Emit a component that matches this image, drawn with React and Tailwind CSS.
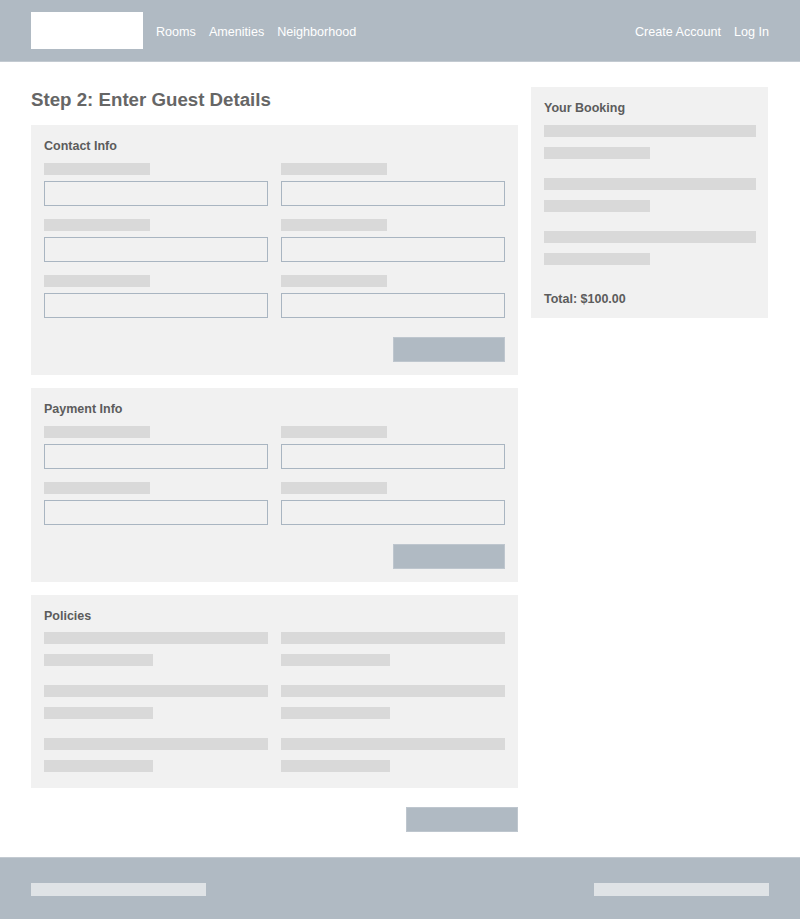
import React from 'react';

const font = { fontFamily: '"Liberation Sans", Arial, sans-serif' };

function Bar({ className = '' }) {
  return <div className={`h-[12px] bg-[#d9d9d9] ${className}`}></div>;
}

function Field() {
  return (
    <div className="flex flex-col">
      <Bar className="w-[106px]" />
      <div className="mt-[6px] h-[25px] border border-[#a9b5c1] bg-[#f1f1f1]"></div>
    </div>
  );
}

function Button() {
  return <div className="w-[112px] h-[25px] bg-[#b0bac3] border border-[#bec6ce]"></div>;
}

function FormCard({ title, rows }) {
  return (
    <div className="bg-[#f1f1f1] px-[13px] pt-[14px] pb-[13px]">
      <h3 className="text-[12.5px] leading-[14px] font-bold text-[#5c5c5c]">{title}</h3>
      <div className="mt-[10px] grid grid-cols-2 gap-x-[13px] gap-y-[13px]">
        {Array.from({ length: rows * 2 }).map((_, i) => (
          <Field key={i} />
        ))}
      </div>
      <div className="mt-[19px] flex justify-end">
        <Button />
      </div>
    </div>
  );
}

function Policy() {
  return (
    <div className="flex flex-col gap-[10px]">
      <Bar className="w-full" />
      <Bar className="w-[109px]" />
    </div>
  );
}

export default function App() {
  return (
    <div style={font} className="min-h-screen bg-white flex flex-col">
      {/* Header */}
      <header className="h-[62px] bg-[#b0bac3] border-b border-[#c3cad1] px-[31px] flex items-center justify-between">
        <div className="flex items-center gap-[13px]">
          <div className="w-[112px] h-[37px] bg-white"></div>
          <nav className="flex gap-[13px] pt-[3px] text-[12.6px] text-white">
            <span>Rooms</span>
            <span>Amenities</span>
            <span>Neighborhood</span>
          </nav>
        </div>
        <nav className="flex gap-[13px] pt-[3px] text-[12.6px] text-white">
          <span>Create Account</span>
          <span>Log In</span>
        </nav>
      </header>

      {/* Main */}
      <main className="px-[31px] pt-[25px] pb-[25px] flex gap-[13px] items-start">
        <div className="w-[487px] flex flex-col">
          <h1 className="text-[18.7px] leading-[25px] font-bold text-[#666666] mb-[13px]">
            Step 2: Enter Guest Details
          </h1>
          <FormCard title="Contact Info" rows={3} />
          <div className="mt-[13px]">
            <FormCard title="Payment Info" rows={2} />
          </div>
          <div className="mt-[13px] bg-[#f1f1f1] px-[13px] pt-[14px] pb-[16px]">
            <h3 className="text-[12.5px] leading-[14px] font-bold text-[#5c5c5c]">Policies</h3>
            <div className="mt-[9px] grid grid-cols-2 gap-x-[13px] gap-y-[19px]">
              {Array.from({ length: 6 }).map((_, i) => (
                <Policy key={i} />
              ))}
            </div>
          </div>
          <div className="mt-[19px] flex justify-end">
            <Button />
          </div>
        </div>

        {/* Booking summary */}
        <aside className="w-[237px] bg-[#f1f1f1] pl-[13px] pr-[12px] pt-[14px] pb-[12px]">
          <h3 className="text-[12.5px] leading-[14px] font-bold text-[#5c5c5c]">Your Booking</h3>
          <div className="mt-[10px] flex flex-col gap-[19px]">
            {[0, 1, 2].map((i) => (
              <div key={i} className="flex flex-col gap-[10px]">
                <Bar className="w-full" />
                <Bar className="w-[106px]" />
              </div>
            ))}
          </div>
          <p className="mt-[27px] text-[12.5px] leading-[14px] font-bold text-[#5c5c5c]">Total: $100.00</p>
        </aside>
      </main>

      {/* Footer */}
      <footer className="h-[63px] bg-[#b0bac3] border-t border-[#c3cad1] px-[31px] flex items-center justify-between">
        <div className="w-[175px] h-[13px] bg-[#dfe3e6]"></div>
        <div className="w-[175px] h-[13px] bg-[#dfe3e6]"></div>
      </footer>
    </div>
  );
}
